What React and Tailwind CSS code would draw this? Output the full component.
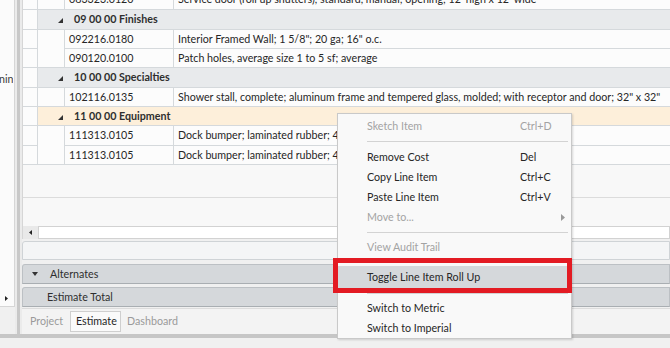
import React from "react";

const FONT = "font-['Lato',sans-serif]";
const BORDER = "border-[#d5d9dc]";

function Tri() {
  return (
    <svg width="5" height="5" viewBox="0 0 5 5" className="block">
      <polygon points="0,5 5,5 5,0" fill="#333" />
    </svg>
  );
}

function HeaderCell() {
  return <div className={`w-[15px] shrink-0 h-full bg-[#fcfcfc] border-r border-b ${BORDER}`} />;
}

function DataRow({ h, code, desc, last }) {
  return (
    <div className={`flex ${h} shrink-0`}>
      <HeaderCell />
      <div className={`w-[26px] shrink-0 h-full bg-[#fcfcfc] ${last ? "border-b " + BORDER : ""}`} />
      <div className={`w-[110px] shrink-0 h-full bg-[#fcfcfc] border-l border-r border-b ${BORDER} pl-[4px] flex items-center whitespace-nowrap text-[#262626]`}>
        {code}
      </div>
      <div className={`flex-1 h-full bg-[#fcfcfc] border-b ${BORDER} pl-[4px] flex items-center whitespace-nowrap overflow-hidden text-[#262626]`}>
        {desc}
      </div>
    </div>
  );
}

function GroupRow({ h, label, orange }) {
  return (
    <div className={`flex ${h} shrink-0`}>
      <HeaderCell />
      <div className={`flex-1 h-full flex items-center border-b ${BORDER} ${orange ? "bg-[#fdefda]" : "bg-[#e8eaec]"}`}>
        <div className="ml-[20px] mt-[2px]"><Tri /></div>
        <span className="ml-[11px] font-bold text-[#2e2e2e] whitespace-nowrap">{label}</span>
      </div>
    </div>
  );
}

function MenuItem({ label, shortcut, disabled, arrow, h = "h-[20px]", highlight }) {
  return (
    <div className={`flex items-center ${h} ${highlight ? "bg-[#d5d8db]" : ""} ${disabled ? "text-[#a3a3a3]" : "text-[#262626]"}`}>
      <span className="ml-[29px] w-[153px] shrink-0 whitespace-nowrap">{label}</span>
      <span className="whitespace-nowrap">{shortcut}</span>
      {arrow && (
        <svg width="4" height="7" viewBox="0 0 4 7" className="ml-auto mr-[6px]">
          <polygon points="0,0 4,3.5 0,7" fill="#9a9a9a" />
        </svg>
      )}
    </div>
  );
}

function Sep({ h }) {
  return (
    <div className={`${h} flex items-center`}>
      <div className="ml-[29px] mr-[3px] flex-1 h-px bg-[#d3d3d3]" />
    </div>
  );
}

export default function App() {
  return (
    <div className={`w-[670px] h-[348px] overflow-hidden bg-[#f0f0f0] relative flex flex-col text-[10.7px] ${FONT}`}>
      <div className="flex h-[334px] shrink-0">
        {/* left panel */}
        <div className="w-[15px] shrink-0 flex flex-col">
          <div className="h-[307px] bg-[#fbfbfb] border-r border-b border-[#d6d6d6] flex flex-col">
            <div className="mt-[70px] w-[13px] overflow-hidden whitespace-nowrap text-[#3a3a3a] h-[18px] flex items-center">
              <span className="-ml-[1px]">ning</span>
            </div>
            <div className="mt-auto h-[15px] flex items-center pl-[5px]">
              <svg width="3" height="5" viewBox="0 0 3 5">
                <polygon points="0,0 3,2.5 0,5" fill="#222" />
              </svg>
            </div>
          </div>
        </div>
        <div className="w-[2px] shrink-0 bg-[#ebebeb]" />
        <div className="w-[3px] shrink-0 bg-[#c8c8c8]" />
        <div className="w-[2px] shrink-0 bg-[#ebebeb]" />
        {/* main */}
        <div className="flex-1 min-w-0 flex flex-col">
          <div className="h-[226px] shrink-0 overflow-hidden bg-[#f8f8f8] border-l border-[#d6d6d6] flex flex-col">
            <div className="-mt-[10px] flex flex-col">
              <DataRow h="h-[20px]" code="083323.0120" desc={"Service door (roll up shutters), standard, manual; opening; 12' high x 12' wide"} last />
              <GroupRow h="h-[20px]" label="09 00 00 Finishes" />
              <DataRow h="h-[19px]" code="092216.0180" desc={'Interior Framed Wall; 1 5/8"; 20 ga; 16" o.c.'} />
              <DataRow h="h-[19px]" code="090120.0100" desc="Patch holes, average size 1 to 5 sf; average" last />
              <GroupRow h="h-[20px]" label="10 00 00 Specialties" />
              <DataRow h="h-[19px]" code="102116.0135" desc={'Shower stall, complete; aluminum frame and tempered glass, molded; with receptor and door; 32" x 32"'} last />
              <GroupRow h="h-[19px]" label="11 00 00 Equipment" orange />
              <DataRow h="h-[20px]" code="111313.0105" desc={'Dock bumper; laminated rubber; 4" thick, 20" high, 11" long'} />
              <DataRow h="h-[19px]" code="111313.0105" desc={'Dock bumper; laminated rubber; 4" thick, 20" high, 11" long'} last />
            </div>
            <div className="h-[33px] shrink-0 border-b border-[#dcdcdc]" />
            <div className="flex-1" />
          </div>
          {/* scrollbar */}
          <div className="h-[13px] shrink-0 flex border-l border-[#d6d6d6]">
            <div className="w-[15px] shrink-0 bg-[#e9e9e9] flex items-center pl-[6px]">
              <svg width="3" height="5" viewBox="0 0 3 5">
                <polygon points="3,0 0,2.5 3,5" fill="#222" />
              </svg>
            </div>
            <div className="flex-1 bg-white border border-[#d2d2d2]" />
          </div>
          <div className="h-[2px] shrink-0" />
          <div className="h-[19px] shrink-0 bg-[#f4f5f6] border border-[#cfd3d6] rounded-tl-[3px]" />
          <div className="h-[4px] shrink-0" />
          <div className="h-[20px] shrink-0 bg-[#d5d8db] border border-[#bcc0c4] border-b-[#a9aeb2] rounded-tl-[3px] flex items-center">
            <svg width="6" height="4" viewBox="0 0 6 4" className="ml-[9px]">
              <polygon points="0,0 6,0 3,4" fill="#333" />
            </svg>
            <span className="ml-[12px] text-[#2e2e2e]">Alternates</span>
          </div>
          <div className="h-[3px] shrink-0" />
          <div className="h-[20px] shrink-0 bg-[#d5d8db] border border-[#bcc0c4] border-b-[#a9aeb2] rounded-tl-[3px] flex items-center">
            <span className="ml-[24px] text-[#2e2e2e]">Estimate Total</span>
          </div>
          <div className="h-[1px] shrink-0" />
          <div className="flex-1 flex items-start border-t border-[#dcdcdc] bg-[#f3f3f3]">
            <div className="w-[48px] shrink-0 h-[21px] mt-[2px] flex items-center pl-[8px] text-[#9a9a9a]">Project</div>
            <div className="w-[51px] shrink-0 h-[21px] mt-[2px] flex items-center pl-[5px] bg-[#fafafa] border border-[#cfcfcf] text-[#262626]">Estimate</div>
            <div className="h-[21px] mt-[2px] flex items-center pl-[6px] text-[#9a9a9a]">Dashboard</div>
          </div>
        </div>
      </div>
      <div className="h-[4px] shrink-0 bg-[#c6c6c6]" />
      <div className="flex-1 bg-[#f0f0f0]" />

      {/* context menu */}
      <div className="absolute left-[337px] top-[113px] w-[235px] h-[226px] bg-[#f9f9f9] border border-[#c9c9c9] shadow-[1px_1px_2px_rgba(0,0,0,0.15)] flex flex-col pt-[2px]">
        <MenuItem label="Sketch Item" shortcut="Ctrl+D" disabled />
        <Sep h="h-[11px]" />
        <MenuItem label="Remove Cost" shortcut="Del" />
        <MenuItem label="Copy Line Item" shortcut="Ctrl+C" />
        <MenuItem label="Paste Line Item" shortcut="Ctrl+V" />
        <MenuItem label="Move to..." disabled arrow />
        <Sep h="h-[10px]" />
        <MenuItem label="View Audit Trail" disabled />
        <Sep h="h-[9px]" />
        <MenuItem label="Toggle Line Item Roll Up" h="h-[22px]" highlight />
        <Sep h="h-[10px]" />
        <MenuItem label="Switch to Metric" />
        <MenuItem label="Switch to Imperial" />
      </div>
      {/* red annotation box */}
      <div className="absolute left-[333px] top-[258px] w-[239px] h-[35px] border-[5px] border-[#e31b23]" />
    </div>
  );
}
